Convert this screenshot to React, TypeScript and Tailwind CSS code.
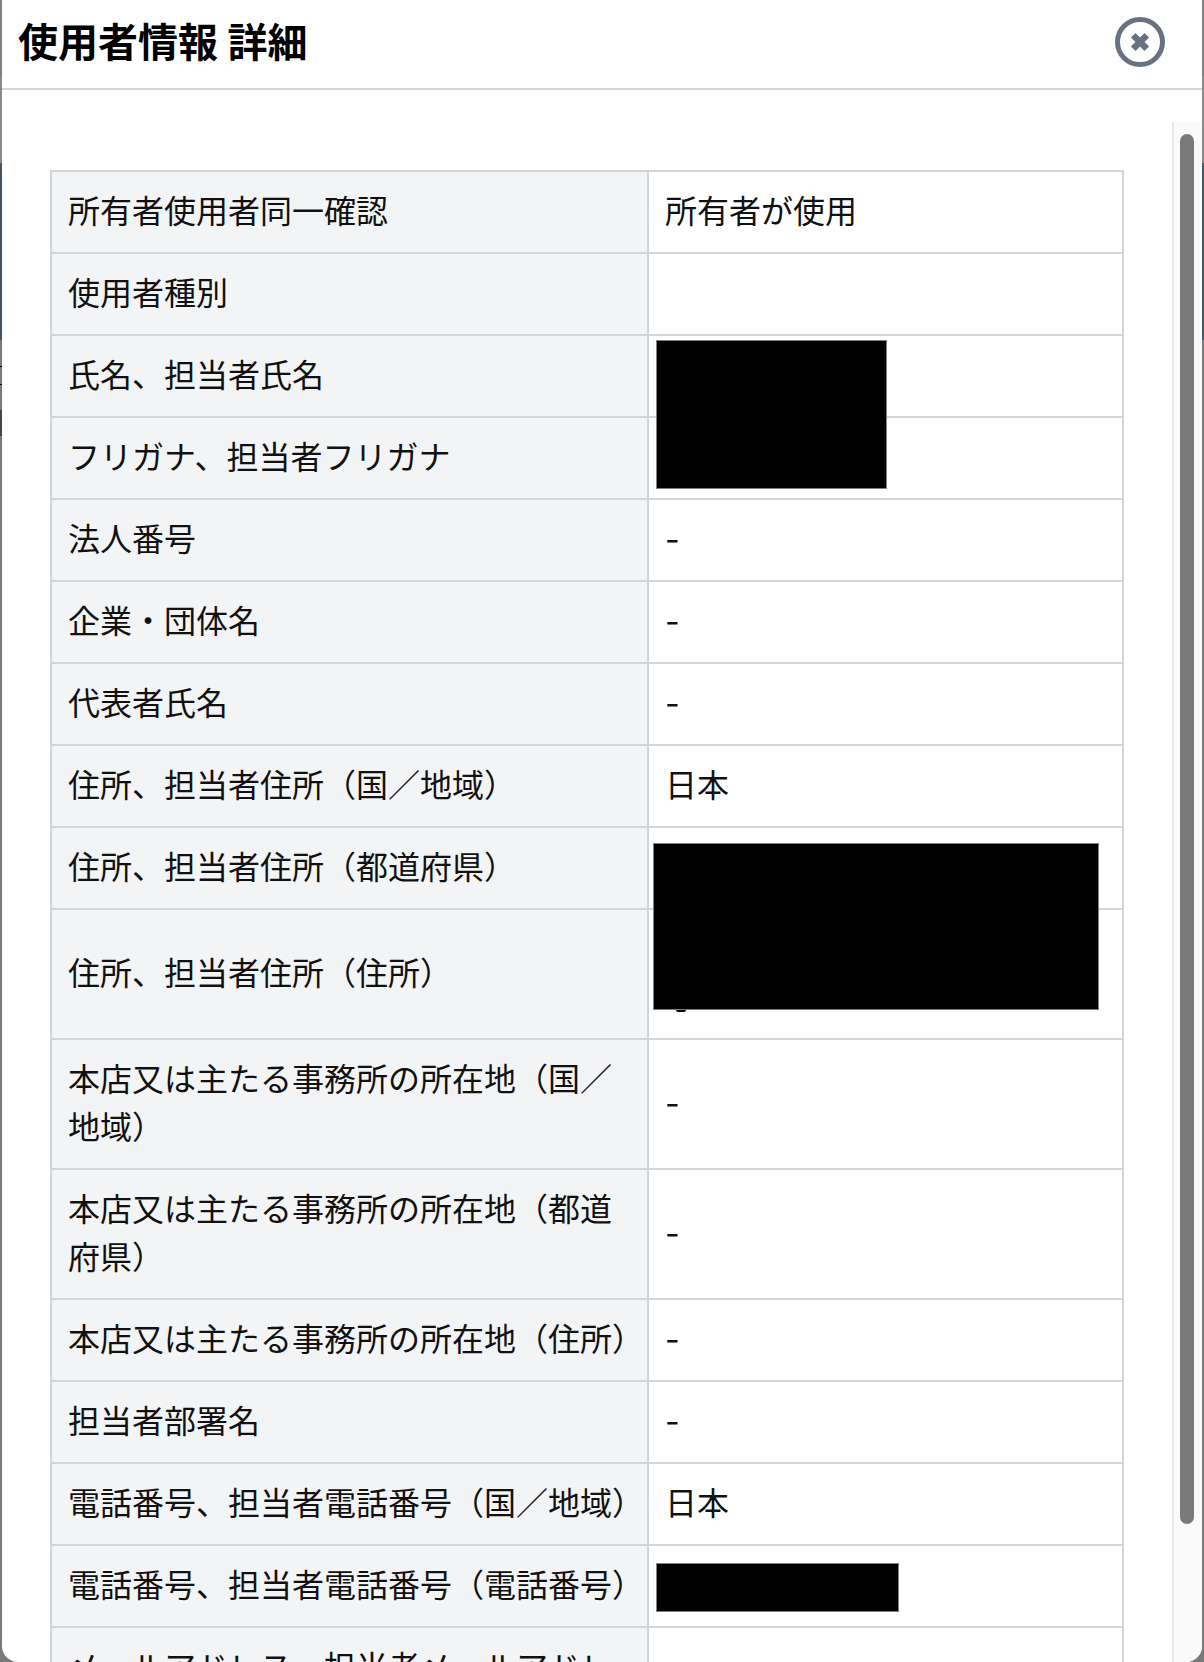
const rows: { label: string; value?: string; tall?: boolean }[] = [
  { label: "所有者使用者同一確認", value: "所有者が使用" },
  { label: "使用者種別" },
  { label: "氏名、担当者氏名" },
  { label: "フリガナ、担当者フリガナ" },
  { label: "法人番号", value: "-" },
  { label: "企業・団体名", value: "-" },
  { label: "代表者氏名", value: "-" },
  { label: "住所、担当者住所（国／地域）", value: "日本" },
  { label: "住所、担当者住所（都道府県）" },
  { label: "住所、担当者住所（住所）", tall: true },
  { label: "本店又は主たる事務所の所在地（国／地域）", value: "-" },
  { label: "本店又は主たる事務所の所在地（都道府県）", value: "-" },
  { label: "本店又は主たる事務所の所在地（住所）", value: "-" },
  { label: "担当者部署名", value: "-" },
  { label: "電話番号、担当者電話番号（国／地域）", value: "日本" },
  { label: "電話番号、担当者電話番号（電話番号）" },
  { label: "メールアドレス、担当者メールアドレス" },
];

// page behind the modal, only its edges show
function Backdrop() {
  return (
    <div className="absolute inset-0 bg-[#7a7a7a]">
      <div className="h-[76px] bg-[#808080]" />
      <div className="h-[87px] bg-[#8a8a8a]" />
      <div className="h-[177px] bg-[#47535f]" />
      <div className="absolute left-0 top-[366px] w-[2px]">
        <div className="h-px bg-black" />
        <div className="h-[17px]" />
        <div className="h-px bg-black" />
        <div className="h-[25px]" />
        <div className="h-[26px] bg-[#444444]" />
      </div>
    </div>
  );
}

function Redaction({ className }: { className: string }) {
  return <div className={`absolute border border-[#808080] bg-black ${className}`} />;
}

export default function App() {
  return (
    <div className="relative h-[1662px] w-[1204px] overflow-hidden font-['Inter','Noto_Sans_CJK_JP',sans-serif] text-[#111111]">
      <Backdrop />

      <div className="relative mx-[2px] flex h-full flex-col overflow-hidden rounded-b-2xl bg-white">
        <header className="flex h-[90px] shrink-0 items-center justify-between border-b-2 border-gray-300 pb-1 pl-4 pr-8">
          <h1 className="mt-[2px] text-[40px] font-bold leading-[48px] text-black">使用者情報 詳細</h1>
          <svg className="h-[60px] w-[60px] text-gray-500" fill="none" viewBox="0 0 24 24" stroke="currentColor" strokeWidth={2}>
            <circle cx="12" cy="12" r="9" />
            <path strokeWidth={2.6} strokeLinejoin="round" d="M9.3 14.7l5.4-5.4m0 5.4l-5.4-5.4" />
          </svg>
        </header>

        <div className="flex min-h-0 flex-1">
          <main className="w-[1170px] shrink-0 pl-12 pt-20">
            <table className="w-[1074px] table-fixed border-collapse text-[32px] leading-[48px]">
              <tbody>
                {rows.map((row) => (
                  <tr key={row.label} className={row.tall ? "h-[130px]" : undefined}>
                    <th className="w-[597px] border-2 border-gray-300 bg-gray-100 p-4 text-left font-normal">{row.label}</th>
                    <td className="border-2 border-gray-300 p-4">{row.value}</td>
                  </tr>
                ))}
              </tbody>
            </table>
          </main>

          <div className="mt-8 w-[30px] shrink-0 border-l-2 border-[#e8e8e8] bg-[#fafafa] pl-[6px] pt-3">
            <div className="h-[1390px] w-[14px] rounded-full bg-[#7a7a7a]" />
          </div>
        </div>
      </div>

      <Redaction className="left-[656px] top-[340px] h-[149px] w-[231px]" />
      <Redaction className="left-[653px] top-[843px] h-[167px] w-[446px]" />
      <div className="absolute left-[676px] top-[1010px] h-[2px] w-[10px] rounded-b-full bg-black" />
      <Redaction className="left-[656px] top-[1563px] h-[49px] w-[243px]" />
    </div>
  );
}
